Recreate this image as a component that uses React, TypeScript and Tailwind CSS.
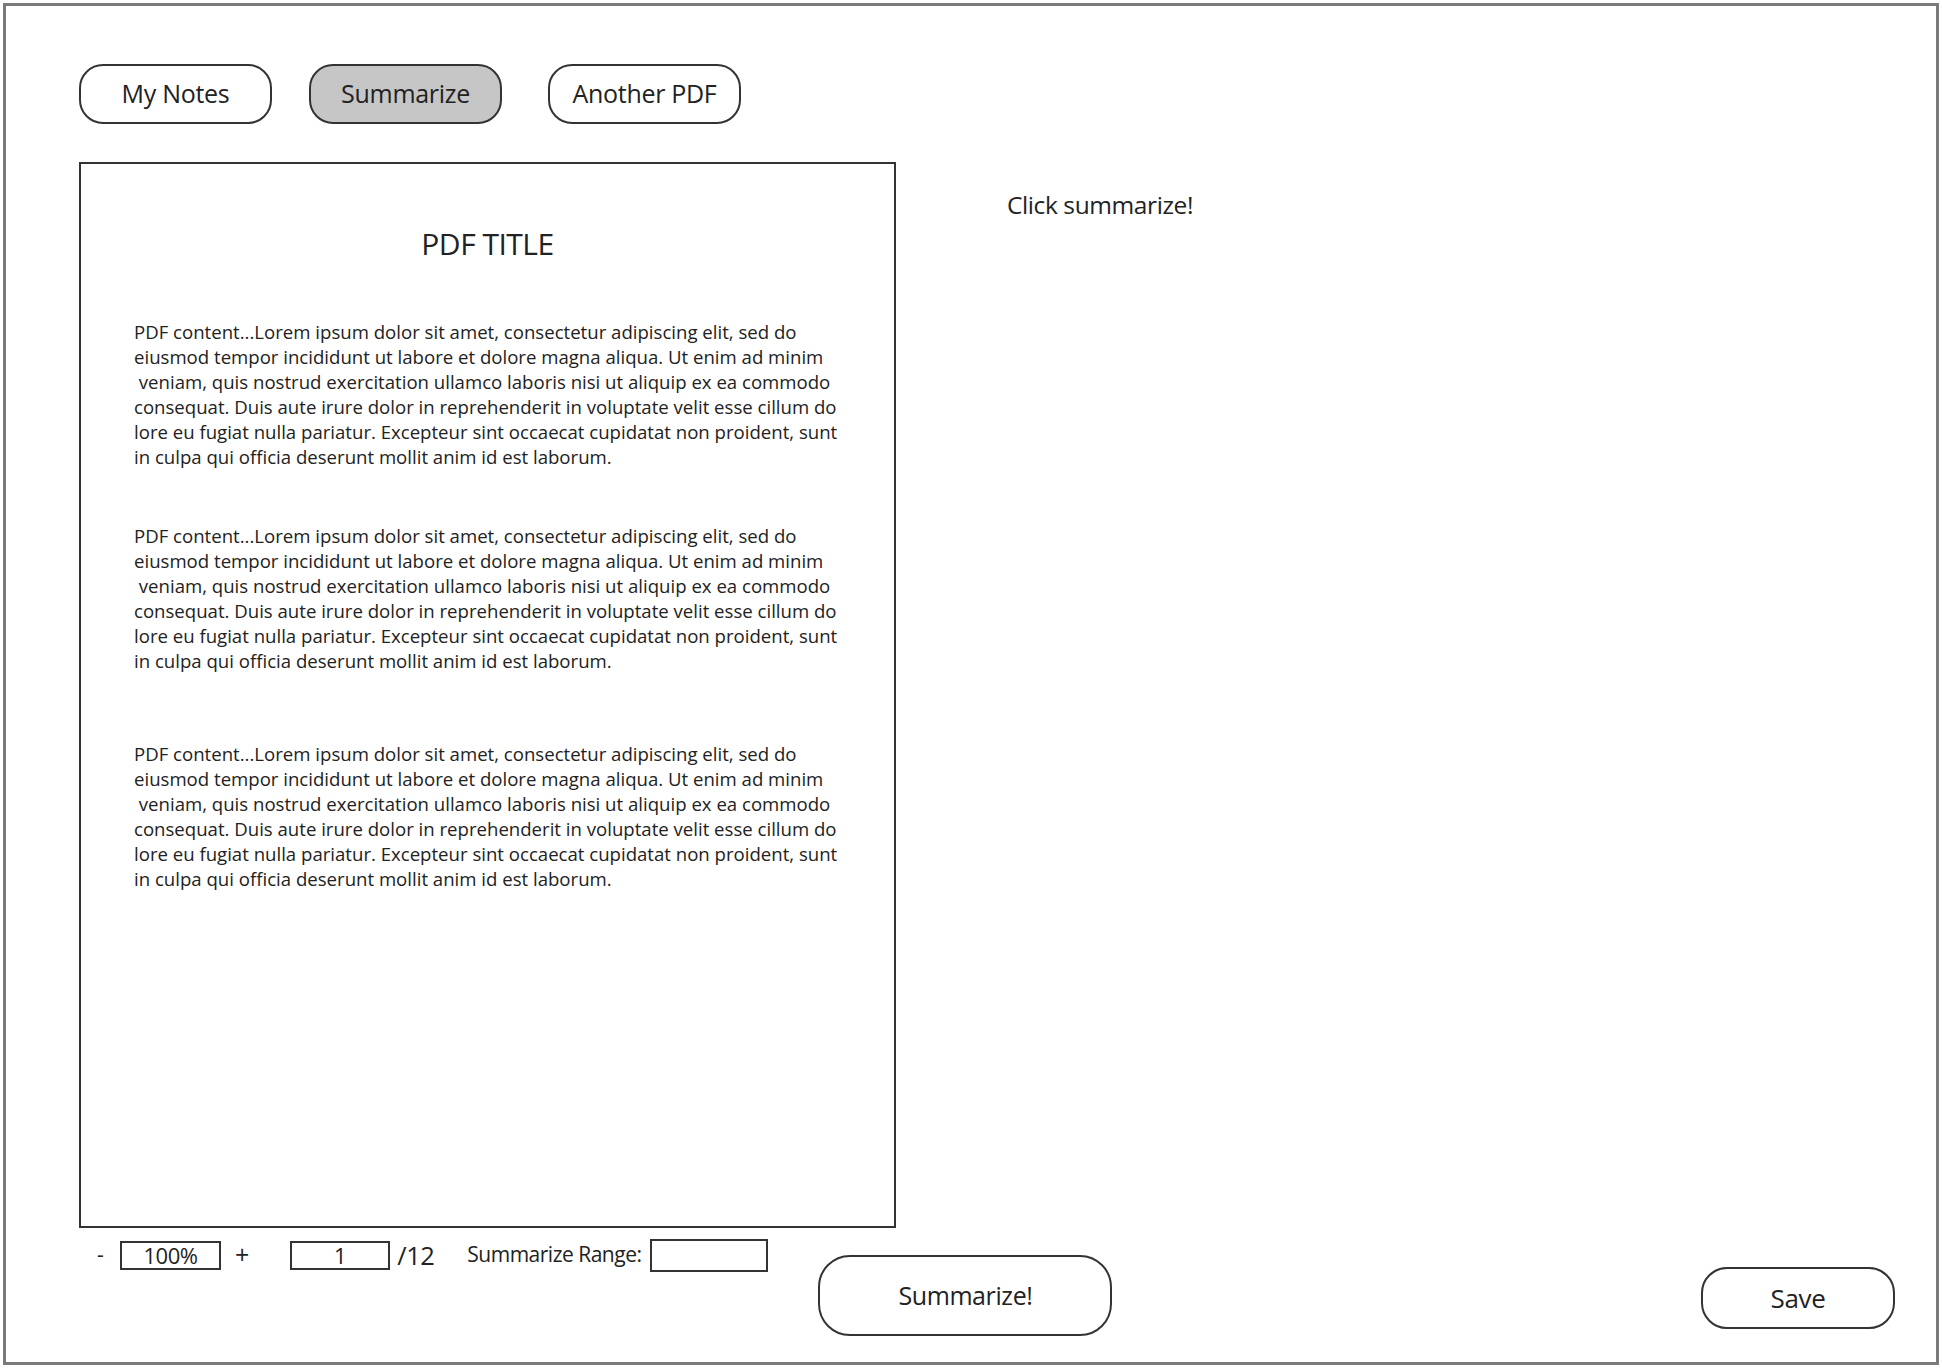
const lines = [
  "PDF content...Lorem ipsum dolor sit amet, consectetur adipiscing elit, sed do",
  "eiusmod tempor incididunt ut labore et dolore magna aliqua. Ut enim ad minim",
  " veniam, quis nostrud exercitation ullamco laboris nisi ut aliquip ex ea commodo",
  "consequat. Duis aute irure dolor in reprehenderit in voluptate velit esse cillum do",
  "lore eu fugiat nulla pariatur. Excepteur sint occaecat cupidatat non proident, sunt",
  "in culpa qui officia deserunt mollit anim id est laborum.",
];

function Paragraph({ className }: { className?: string }) {
  return (
    <div className={`text-[18.6px] leading-[25px] text-[#222] ${className ?? ""}`}>
      {lines.map((l, i) => (
        <div key={i} className="whitespace-pre">
          {l}
        </div>
      ))}
    </div>
  );
}

function TabButton({ label, active }: { label: string; active?: boolean }) {
  return (
    <button
      className={`w-[193px] h-[60px] rounded-[24px] border-2 border-[#333] text-[25px] text-[#222] tracking-[-0.3px] ${
        active ? "bg-[#c6c6c6]" : "bg-white"
      }`}
    >
      {label}
    </button>
  );
}

export default function App() {
  return (
    <div
      className="w-[1942px] h-[1368px] bg-white p-[3px]"
      style={{ fontFamily: '"Open Sans", "Noto Sans", sans-serif' }}
    >
      <div className="h-full border-[3px] border-[#7a7a7a] pl-[73px] pr-[41px] pt-[58px] flex flex-col">
        <div className="flex">
          <TabButton label="My Notes" />
          <div className="ml-[37px]">
            <TabButton label="Summarize" active />
          </div>
          <div className="ml-[46px]">
            <TabButton label="Another PDF" />
          </div>
        </div>

        <div className="flex mt-[38px]">
          <div className="w-[817px] h-[1066px] border-2 border-[#333] pl-[53px] pt-[59px]">
            <div className="text-center text-[30px] leading-[42px] text-[#222] tracking-[-0.5px] -ml-[53px]">
              PDF TITLE
            </div>
            <Paragraph className="mt-[54px]" />
            <Paragraph className="mt-[54px]" />
            <Paragraph className="mt-[68px]" />
          </div>
          <div className="ml-[111px] mt-[26px] text-[24.5px] leading-[33px] text-[#222] tracking-[-0.4px]">
            Click summarize!
          </div>
        </div>

        <div className="flex items-start">
          <div className="flex items-center mt-[8px] text-[21px] text-[#222]">
            <span className="ml-[18px] w-[23px]">-</span>
            <div className="w-[101px] h-[29px] border-2 border-[#333] flex items-center justify-center text-[22px] leading-none tracking-[-0.5px]">
              100%
            </div>
            <span className="ml-[14px] text-[25px]">+</span>
            <div className="ml-[41px] w-[100px] h-[29px] border-2 border-[#333] flex items-center justify-center text-[22px] leading-none">
              1
            </div>
            <span className="ml-[7px] text-[25.5px] tracking-[-0.5px]">/12</span>
            <span className="ml-[33px] text-[21px] tracking-[-0.5px]">Summarize Range:</span>
            <div className="ml-[9px] w-[118px] h-[33px] border-2 border-[#333]" />
          </div>
          <button className="ml-[50px] mt-[27px] w-[294px] h-[81px] rounded-[32px] border-2 border-[#333] text-[25px] text-[#222] tracking-[-0.4px]">
            Summarize!
          </button>
          <button className="ml-auto mt-[39px] w-[194px] h-[62px] rounded-[26px] border-2 border-[#333] text-[26px] text-[#222] tracking-[-0.3px]">
            Save
          </button>
        </div>
      </div>
    </div>
  );
}
